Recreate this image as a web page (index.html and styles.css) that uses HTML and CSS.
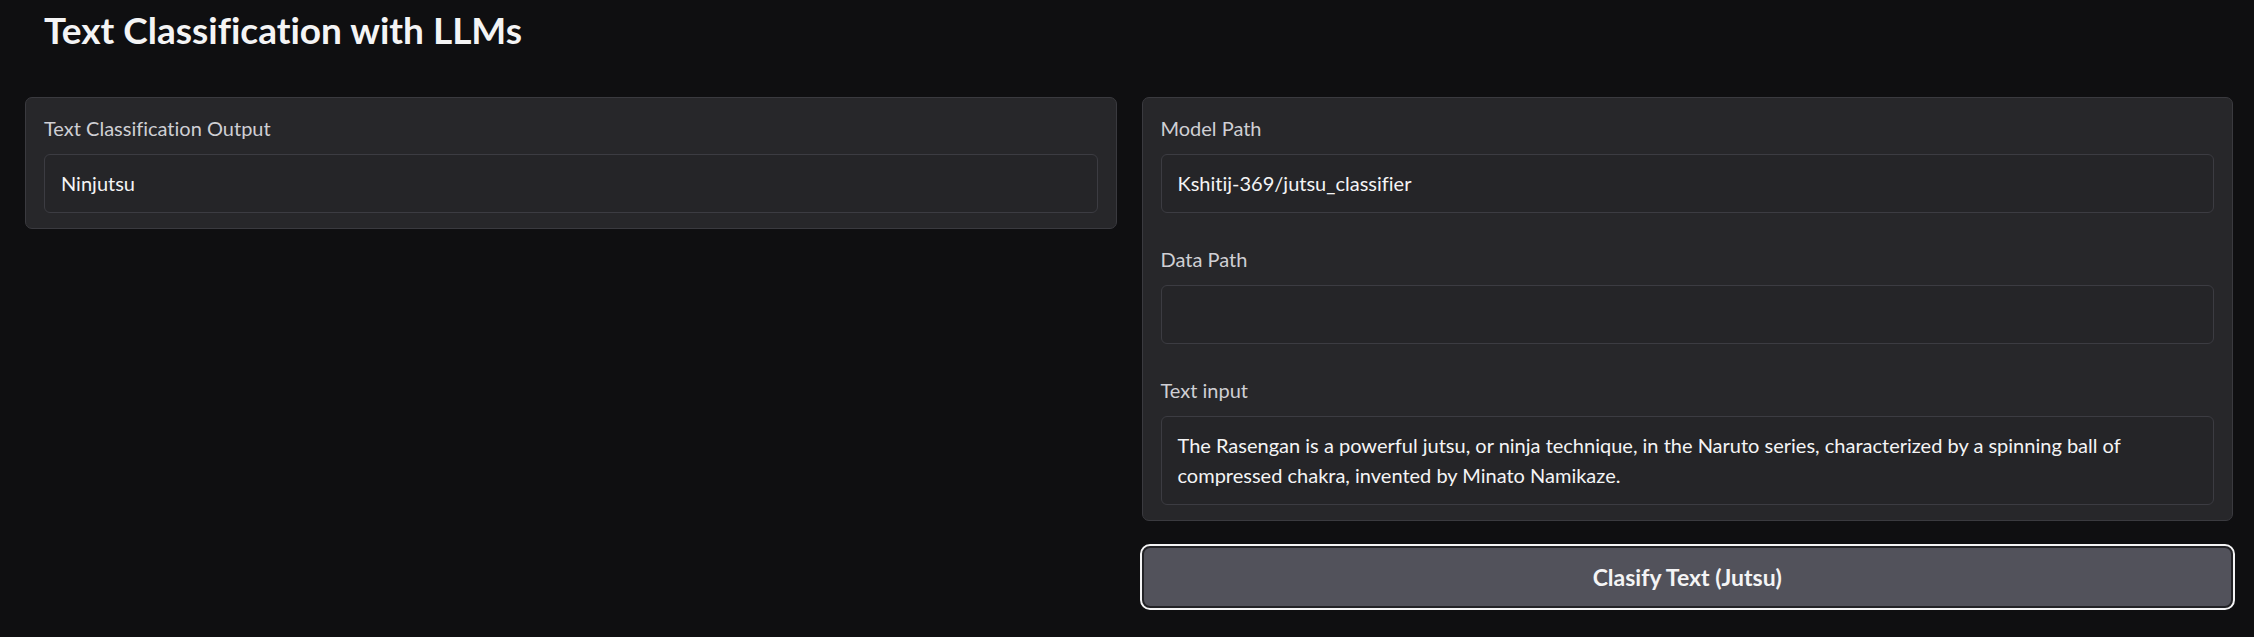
FILE: index.html
```html
<!DOCTYPE html>
<html lang="en">
<head>
<meta charset="utf-8">
<title>Text Classification with LLMs</title>
<link rel="stylesheet" href="styles.css">
</head>
<body>
<div class="page">
  <h1 class="title">Text Classification with LLMs</h1>
  <div class="row">
    <div class="col">
      <div class="panel">
        <div class="field">
          <span class="label">Text Classification Output</span>
          <div class="input">Ninjutsu</div>
        </div>
      </div>
    </div>
    <div class="col">
      <div class="panel">
        <div class="field">
          <span class="label">Model Path</span>
          <div class="input">Kshitij-369/jutsu_classifier</div>
        </div>
        <div class="field">
          <span class="label">Data Path</span>
          <div class="input"></div>
        </div>
        <div class="field">
          <span class="label">Text input</span>
          <div class="input textarea"><span class="line">The Rasengan is a powerful jutsu, or ninja technique, in the Naruto series, characterized by a spinning ball of</span><span class="line">compressed chakra, invented by Minato Namikaze.</span></div>
        </div>
      </div>
      <button class="btn" type="button">Clasify Text (Jutsu)</button>
    </div>
  </div>
</div>
</body>
</html>
```

FILE: styles.css
```css
* { box-sizing: border-box; }

html, body {
  margin: 0;
  padding: 0;
  background: #0f0f11;
}

body {
  font-family: "Lato", "Source Sans Pro", "Noto Sans", sans-serif;
  font-variant-ligatures: none;
  color: #f4f4f5;
}

.page {
  padding: 0 21px 0 25px;
}

.title {
  margin: 8px 0 0 19px;
  font-size: 37px;
  line-height: 44px;
  font-weight: 700;
  color: #f4f4f5;
}

.row {
  margin-top: 45px;
  display: grid;
  grid-template-columns: 1fr 1fr;
  column-gap: 25px;
  align-items: start;
}

.col {
  display: flex;
  flex-direction: column;
  gap: 23px;
}

.panel {
  background: #27272a;
  border: 1px solid #3a3a3f;
  border-radius: 7px;
  padding: 17px 18px 15px 18px;
  display: flex;
  flex-direction: column;
  gap: 33px;
}

.field {
  display: flex;
  flex-direction: column;
  gap: 13px;
}

.label {
  display: block;
  font-size: 20px;
  line-height: 26px;
  color: #cfcfd4;
}

.input {
  background: #252528;
  border: 1px solid #3c3c42;
  border-radius: 6px;
  padding: 13px 16px 14px 16px;
  min-height: 59px;
  font-size: 20px;
  line-height: 30px;
  color: #f4f4f5;
}

.textarea .line {
  display: block;
  white-space: nowrap;
}

.btn {
  margin: 2px 0;
  height: 62px;
  width: 100%;
  background: #52525b;
  border: 2px solid #222226;
  border-radius: 8px;
  outline: 2px solid #f4f4f5;
  outline-offset: 0;
  font-family: inherit;
  font-size: 23px;
  font-weight: 700;
  color: #f4f4f5;
  cursor: pointer;
}
```
